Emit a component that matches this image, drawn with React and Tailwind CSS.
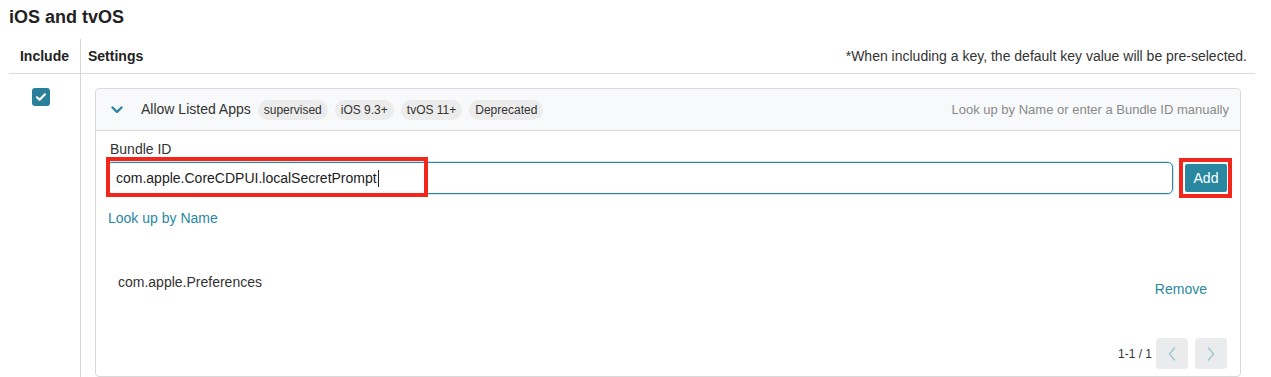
const teal = "text-[#2a88a1]"

const Badge = ({ children }) => (
  <span className="h-5 px-[6px] rounded-full bg-[#ececec] text-[12px] leading-5 text-[#333]">{children}</span>
)

const App = () => {
  return (
    <div className="w-[1271px] h-[377px] overflow-hidden bg-white text-[#333] font-['Liberation_Sans',Arial,sans-serif]">
      <h2 className="pl-[9px] pt-[6px] text-[18px] leading-[22px] font-bold text-[#222]">iOS and tvOS</h2>

      <div className="ml-[9px] w-[1246px] mt-[11px] flex">
        {/* Include column */}
        <div className="w-[72px] border-r border-[#d6d6d6] shrink-0">
          <div className="h-[35px] border-b border-[#dcdcdc] flex items-center justify-center text-[14px] font-bold text-[#222]">
            Include
          </div>
          <div className="pt-[14px] pl-[23px] h-[300px]">
            <div className="w-[18px] h-[18px] rounded-[3px] bg-[#2a7f9b] flex items-center justify-center">
              <svg width="12" height="12" viewBox="0 0 12 12" fill="none">
                <path d="M2 6.3l2.6 2.5L10 3.3" stroke="white" strokeWidth="2.2" strokeLinecap="round" strokeLinejoin="round" />
              </svg>
            </div>
          </div>
        </div>

        {/* Settings column */}
        <div className="flex-1 min-w-0">
          <div className="h-[35px] border-b border-[#dcdcdc] flex items-center justify-between pl-[7px] pr-[8px] text-[14px]">
            <span className="font-bold text-[#222]">Settings</span>
            <span className="text-[#333]">*When including a key, the default key value will be pre-selected.</span>
          </div>

          <div className="pl-[14px] pr-[14px] pt-[14px]">
            <div className="border border-[#d9d9d9] rounded-[4px] h-[289px] flex flex-col">
              {/* card header */}
              <div className="h-[42px] shrink-0 bg-[#f8f9fa] rounded-t-[4px] border-b border-[#dadada] flex items-center pl-[15px] pr-[11px]">
                <svg width="12" height="8" viewBox="0 0 12 8" fill="none" className="mt-[1px]">
                  <path d="M1.5 1.5L6 6l4.5-4.5" stroke="#2a88a1" strokeWidth="2.4" strokeLinecap="round" strokeLinejoin="round" />
                </svg>
                <span className="ml-[18px] text-[14px] text-[#333]">Allow Listed Apps</span>
                <div className="ml-[7px] flex gap-[7px]">
                  <Badge>supervised</Badge>
                  <Badge>iOS 9.3+</Badge>
                  <Badge>tvOS 11+</Badge>
                  <Badge>Deprecated</Badge>
                </div>
                <span className="ml-auto text-[13px] text-[#8a8a8a]">Look up by Name or enter a Bundle ID manually</span>
              </div>

              {/* card body */}
              <div className="flex-1 pl-[11px] pr-[13px] pt-[10px] flex flex-col">
                <label className="pl-[3px] text-[14px] leading-4 text-[#333]">Bundle ID</label>
                <div className="mt-[5px] flex items-center gap-[12px]">
                  <div className="relative flex-1">
                    <div className="h-[32px] border border-[#2a86a0] rounded-[5px] shadow-[0_0_0_1px_#d3e8ee] flex items-center pl-[8px] text-[14px] text-[#222]">
                      com.apple.CoreCDPUI.localSecretPrompt
                      <span className="w-px h-[17px] bg-[#222] ml-[1px]" />
                    </div>
                    <div className="absolute left-[-1px] top-[-5px] w-[322px] h-[40px] border-4 border-[#f2261a]" />
                  </div>
                  <div className="relative">
                    <button className="w-[42px] h-[28px] bg-[#2a87a0] text-white text-[14px] rounded-[2px]">Add</button>
                    <div className="absolute left-[-6px] top-[-6px] w-[53px] h-[40px] border-4 border-[#f2261a]" />
                  </div>
                </div>

                <div className={`mt-[16px] pl-[1px] text-[14px] leading-4 ${teal}`}>Look up by Name</div>

                <div className="mt-[48px] flex justify-between pl-[11px] pr-[20px]">
                  <span className="text-[14px] leading-4 text-[#333]">com.apple.Preferences</span>
                  <span className={`mt-[7px] text-[14px] leading-4 ${teal}`}>Remove</span>
                </div>

                <div className="mt-auto mb-[7px] flex items-center justify-end gap-[7px]">
                  <span className="text-[12px] text-[#333] mr-[-3px]">1-1 / 1</span>
                  <div className="w-[32px] h-[31px] rounded-[4px] bg-[#e9ebec] flex items-center justify-center">
                    <svg width="10" height="16" viewBox="0 0 10 16" fill="none">
                      <path d="M7.5 2L2.5 8l5 6" stroke="#9ec9d5" strokeWidth="1.5" strokeLinecap="round" strokeLinejoin="round" />
                    </svg>
                  </div>
                  <div className="w-[32px] h-[31px] rounded-[4px] bg-[#e9ebec] flex items-center justify-center">
                    <svg width="10" height="16" viewBox="0 0 10 16" fill="none">
                      <path d="M2.5 2l5 6-5 6" stroke="#9ec9d5" strokeWidth="1.5" strokeLinecap="round" strokeLinejoin="round" />
                    </svg>
                  </div>
                </div>
              </div>
            </div>
          </div>
        </div>
      </div>
    </div>
  )
}

export default App
